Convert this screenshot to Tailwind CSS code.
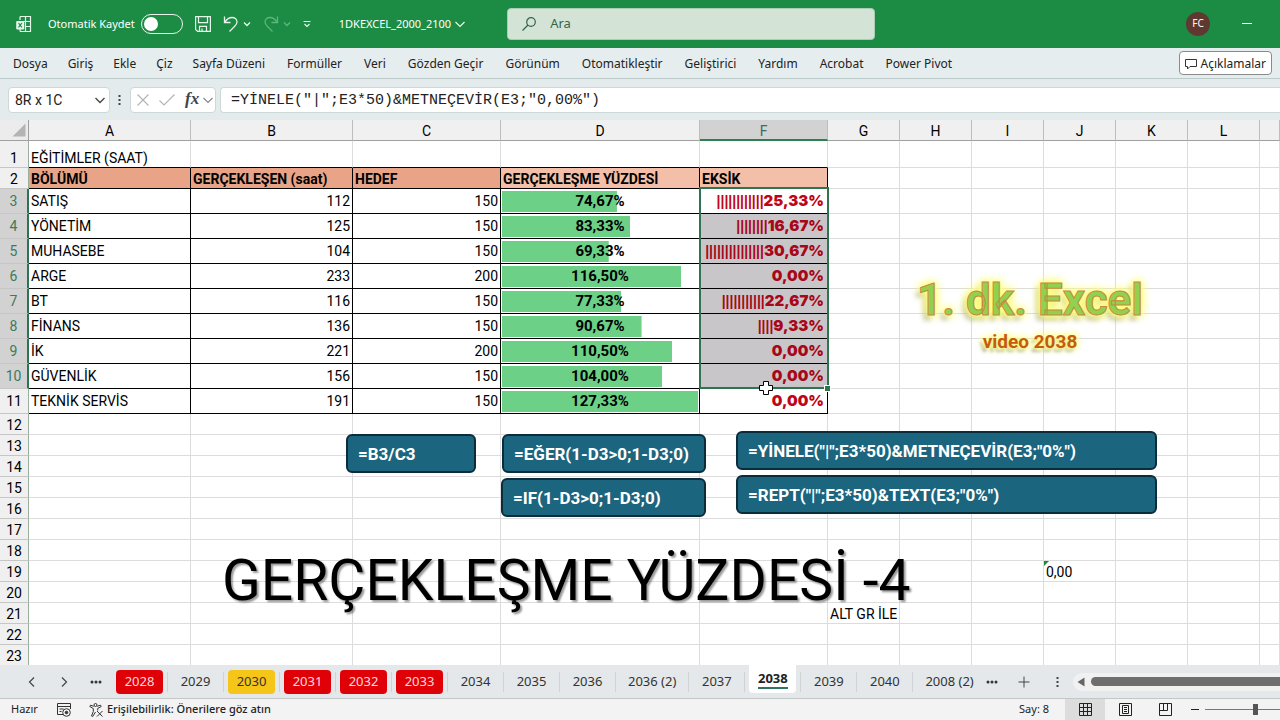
<!DOCTYPE html>
<html lang="tr">
  <head>
    <meta charset="UTF-8" />
    <title>1DKEXCEL_2000_2100</title>
    <meta name="viewport" content="width=device-width, initial-scale=1.0" />
    <script src="https://cdn.jsdelivr.net/npm/@tailwindcss/browser@4"></script>
  </head>
  <body
    class="h-screen flex flex-col overflow-hidden bg-white text-[#222] font-['Noto_Sans',sans-serif] text-xs"
  >
    <!-- Title bar -->
    <header class="h-12 shrink-0 flex items-center bg-[#1c8c45] text-white pl-4 pr-7">
      <svg class="w-4 h-4" viewBox="0 0 16 16" fill="none" stroke="#e6f6ea" stroke-width="1.2">
        <path d="M4 4V1.5a1 1 0 0 1 1-1h9.5v15H5a1 1 0 0 1-1-1V12M9.5.5v15M4 5.5h10.5M9 10.5h5.5" />
        <rect x=".2" y="5" width="8" height="8.5" rx="1" fill="#e6f6ea" stroke="none" />
        <path d="M2.5 7l3.4 4.4M5.9 7l-3.4 4.4" stroke="#1c8c45" />
      </svg>
      <label class="ml-4 flex items-center gap-1.5 text-[11px]">
        Otomatik Kaydet
        <input
          type="checkbox"
          class="appearance-none w-[42px] h-5 rounded-full border border-white/90 flex items-center px-0.5 before:content-[''] before:w-3.5 before:h-3.5 before:rounded-full before:bg-white"
        />
      </label>
      <button class="ml-3" aria-label="Kaydet">
        <svg class="w-4 h-4" viewBox="0 0 16 16" fill="none" stroke="#e6f6ea" stroke-width="1.2">
          <path d="M.6.6h14.8v14.8H2.6l-2-2zM3.5.6v6h9v-6M4.5 15.4v-5h7v5M7 15v-2.5" />
        </svg>
      </button>
      <button class="ml-3 flex items-center gap-1" aria-label="Geri Al">
        <svg class="w-4 h-4" viewBox="0 0 16 16" fill="none" stroke="#e6f6ea" stroke-width="1.3">
          <path d="M1.5.5v6h6M1.8 6.2C4 3 6.5 1.5 9 1.5c3 0 5 2 5 4.5 0 2-1 3-2.5 4.5L6.5 15.5" />
        </svg>
        <svg class="w-2 h-2" viewBox="0 0 8 8" fill="none" stroke="#e6f6ea" stroke-width="1.3"><path d="M1 2.5l3 3 3-3" /></svg>
      </button>
      <button class="ml-3 flex items-center gap-1" aria-label="Yinele">
        <svg class="w-4 h-4" viewBox="0 0 16 16" fill="none" stroke="#5fb57c" stroke-width="1.3">
          <path d="M14.5.5v6h-6M14.2 6.2C12 3 9.5 1.5 7 1.5c-3 0-5 2-5 4.5 0 2 1 3 2.5 4.5l5 5" />
        </svg>
        <svg class="w-2 h-2" viewBox="0 0 8 8" fill="none" stroke="#5fb57c" stroke-width="1.3"><path d="M1 2.5l3 3 3-3" /></svg>
      </button>
      <button class="ml-3" aria-label="Hızlı Erişim">
        <svg class="w-2 h-2" viewBox="0 0 8 8" fill="none" stroke="#e6f6ea" stroke-width="1.2"><path d="M.5 1.5h7M1.5 4L4 6.5 6.5 4" /></svg>
      </button>
      <button class="ml-7 flex items-center gap-1 text-[11px] whitespace-nowrap">
        1DKEXCEL_2000_2100
        <svg class="w-2.5 h-2.5" viewBox="0 0 10 10" fill="none" stroke="#e6f6ea" stroke-width="1.2"><path d="M.5 3L5 7.5 9.5 3" /></svg>
      </button>
      <label class="ml-[42px] w-[368px] h-8 flex items-center gap-3.5 rounded-sm border border-[#a9cdb4] bg-[#d3e4d7] px-3.5 text-[#35644a]">
        <svg class="w-3.5 h-3.5" viewBox="0 0 14 14" fill="none" stroke="#35644a" stroke-width="1.2"><circle cx="9" cy="5" r="4.3" /><path d="M6 8L.5 13.5" /></svg>
        <input type="text" placeholder="Ara" class="flex-1 text-[13px] outline-none placeholder:text-[#35644a]" />
      </label>
      <div class="ml-auto w-6 h-6 rounded-full bg-[#5f3830] flex items-center justify-center text-[10px]">FC</div>
      <button class="ml-8" aria-label="Simge durumuna küçült">
        <svg class="w-2.5 h-2.5" viewBox="0 0 10 10" stroke="#fff"><path d="M0 4.5h10" /></svg>
      </button>
    </header>

    <!-- Ribbon tabs -->
    <nav class="h-[31px] shrink-0 flex items-center gap-5 bg-[#e5edef] border-b border-[#bccaca] pl-[13px] pr-2 whitespace-nowrap">
      <div class="flex gap-5 pt-0.5">
        <a href="#">Dosya</a>
        <a href="#">Giriş</a>
        <a href="#">Ekle</a>
        <a href="#">Çiz</a>
      </div>
      <div class="flex gap-[22px] pt-0.5">
        <a href="#">Sayfa Düzeni</a>
        <a href="#">Formüller</a>
        <a href="#">Veri</a>
        <a href="#">Gözden Geçir</a>
        <a href="#">Görünüm</a>
        <a href="#">Otomatikleştir</a>
        <a href="#">Geliştirici</a>
        <a href="#">Yardım</a>
        <a href="#">Acrobat</a>
        <a href="#">Power Pivot</a>
      </div>
      <button class="ml-auto h-6 flex items-center gap-1 rounded border border-[#8a8a8a] bg-white px-[5px] pt-0.5">
        <svg class="w-3 h-3" viewBox="0 0 12 12" fill="none" stroke="#333"><path d="M.5 1.5h11v7H5L2.5 11V8.5h-2z" /></svg>
        Açıklamalar
      </button>
    </nav>

    <!-- Formula bar -->
    <div class="h-[41px] shrink-0 flex items-center bg-[#e3ebed] pl-2">
      <div class="w-[102px] h-[26px] flex items-center rounded border border-[#cdd8d8] bg-white pl-1.5 pr-1">
        <input type="text" value="8R x 1C" aria-label="Ad Kutusu" class="w-full min-w-0 text-sm font-['Roboto',sans-serif] outline-none" />
        <button aria-label="Adlar">
          <svg class="w-2.5 h-2.5" viewBox="0 0 10 10" fill="none" stroke="#444" stroke-width="1.3"><path d="M.5 3L5 7.5 9.5 3" /></svg>
        </button>
      </div>
      <svg class="w-[3px] h-3 ml-2 mr-[9px]" viewBox="0 0 3 12" fill="#444"><path d="M.5 1h2v2h-2zM.5 5h2v2h-2zM.5 9h2v2h-2z" /></svg>
      <div class="w-[86px] h-[26px] flex items-center gap-2.5 rounded border border-[#cdd8d8] bg-white pl-1.5">
        <svg class="w-3 h-3 shrink-0" viewBox="0 0 12 12" stroke="#b5b5b5" stroke-width="1.2"><path d="M.5.5l11 11M11.5.5l-11 11" /></svg>
        <svg class="w-4 h-3 shrink-0" viewBox="0 0 16 12" fill="none" stroke="#b5b5b5" stroke-width="1.2"><path d="M.5 6.5L5 11 15.5.5" /></svg>
        <button class="flex items-center gap-1 font-['Liberation_Serif',serif] italic text-[17px] font-bold text-[#444]" aria-label="İşlev Ekle">
          fx
          <svg class="w-2.5 h-2.5" viewBox="0 0 10 10" fill="none" stroke="#888" stroke-width="1.2"><path d="M.5 3L5 7.5 9.5 3" /></svg>
        </button>
      </div>
      <input
        type="text"
        aria-label="Formül Çubuğu"
        value='=YİNELE("|";E3*50)&amp;METNEÇEVİR(E3;"0,00%")'
        class="ml-1 flex-1 h-[26px] rounded-l border border-r-0 border-[#cdd8d8] bg-white px-2.5 pt-0.5 font-['Liberation_Mono',monospace] text-[15px] outline-none"
      />
    </div>

    <!-- Sheet -->
    <main class="relative flex-1 min-h-0 overflow-hidden font-['Roboto',sans-serif] text-sm leading-5 text-black">
      <table class="w-full table-fixed border-separate border-spacing-0 whitespace-nowrap">
        <colgroup>
          <col class="w-[29px]" />
          <col class="w-[162px]" />
          <col class="w-[162px]" />
          <col class="w-[148px]" />
          <col class="w-[199px]" />
          <col class="w-[128px]" />
          <col class="w-[72px]" />
          <col class="w-[72px]" />
          <col class="w-[72px]" />
          <col class="w-[72px]" />
          <col class="w-[72px]" />
          <col class="w-[72px]" />
          <col />
        </colgroup>
        <thead id="columns" class="leading-4"></thead>
        <tbody id="rows"></tbody>
      </table>

      <!-- Selection frame -->
      <div class="absolute left-[699px] top-[67px] w-[130px] h-[202px] border-2 border-[#2f7450]"></div>
      <div class="absolute left-[825px] top-[266px] w-[5px] h-[5px] bg-[#2f7450] outline outline-white"></div>

      <!-- Shapes on the sheet -->
      <div class="absolute left-[346px] top-[314px] w-[130px] h-[39px] flex items-center rounded-md border-2 border-[#0b2c3a] bg-[#1c657e] px-2.5 font-bold text-white text-[17px]">=B3/C3</div>
      <div class="absolute left-[502px] top-[314px] w-[204px] h-[39px] flex items-center rounded-md border-2 border-[#0b2c3a] bg-[#1c657e] px-2.5 font-bold text-white text-[17px]">=EĞER(1-D3&gt;0;1-D3;0)</div>
      <div class="absolute left-[501px] top-[358px] w-[205px] h-[39px] flex items-center rounded-md border-2 border-[#0b2c3a] bg-[#1c657e] px-2.5 font-bold text-white text-[17px]">=IF(1-D3&gt;0;1-D3;0)</div>
      <div class="absolute left-[736px] top-[311px] w-[421px] h-[39px] flex items-center rounded-md border-2 border-[#0b2c3a] bg-[#1c657e] px-2.5 font-bold text-white text-[17px]">=YİNELE("|";E3*50)&amp;METNEÇEVİR(E3;"0%")</div>
      <div class="absolute left-[736px] top-[355px] w-[421px] h-[39px] flex items-center rounded-md border-2 border-[#0b2c3a] bg-[#1c657e] px-2.5 font-bold text-white text-[17px]">=REPT("|";E3*50)&amp;TEXT(E3;"0%")</div>

      <div class="absolute left-[222px] top-[431px] text-[57px] leading-[60px] whitespace-nowrap [text-shadow:2px_2px_2px_rgb(0_0_0/0.4)]">GERÇEKLEŞME YÜZDESİ -4</div>

      <div class="absolute left-[900px] top-[154px] w-[260px] text-center font-bold whitespace-nowrap">
        <div class="text-[44px] leading-[52px] text-[#92d050] [-webkit-text-stroke:1px_#c58a3c] [text-shadow:0_0_5px_#ffff80,0_0_8px_#ffff80,0_0_10px_#ffff80,0_0_12px_#ffff80,-4px_5px_5px_rgb(110_110_90/0.5)]">1. dk. Excel</div>
        <div class="text-[19px] leading-8 text-[#c55a11] [text-shadow:0_0_4px_#ffff80,0_0_7px_#ffff80,0_0_9px_#ffff80,-3px_4px_3px_rgb(110_110_90/0.5)]">video 2038</div>
      </div>

      <!-- Pointer -->
      <svg class="absolute left-[759px] top-[261px] w-3.5 h-3.5" viewBox="0 0 14 14"><path d="M4.5.5h5v4h4v5h-4v4h-5v-4h-4v-5h4z" fill="#fff" stroke="#000" /></svg>
    </main>

    <!-- Sheet tabs -->
    <div class="h-[34px] shrink-0 flex items-center bg-[#e4e8ea] border-b border-[#c3c7c8] pl-7 overflow-hidden text-[13px] whitespace-nowrap">
      <button aria-label="Önceki"><svg class="w-2 h-2.5" viewBox="0 0 8 10" fill="none" stroke="#444" stroke-width="1.2"><path d="M6 .5L1.5 5 6 9.5" /></svg></button>
      <button class="ml-6" aria-label="Sonraki"><svg class="w-2 h-2.5" viewBox="0 0 8 10" fill="none" stroke="#444" stroke-width="1.2"><path d="M2 .5L6.5 5 2 9.5" /></svg></button>
      <button class="ml-[22px]" aria-label="Diğer sayfalar"><svg class="w-3 h-1" viewBox="0 0 12 4" fill="#333"><circle cx="2" cy="2" r="1.5" /><circle cx="6" cy="2" r="1.5" /><circle cx="10" cy="2" r="1.5" /></svg></button>
      <div id="tabs" class="flex items-center ml-[10px]"></div>
      <button aria-label="Diğer sayfalar"><svg class="w-3 h-1" viewBox="0 0 12 4" fill="#333"><circle cx="2" cy="2" r="1.5" /><circle cx="6" cy="2" r="1.5" /><circle cx="10" cy="2" r="1.5" /></svg></button>
      <button class="ml-5" aria-label="Yeni sayfa"><svg class="w-3 h-3" viewBox="0 0 12 12" stroke="#444"><path d="M6 .5v11M.5 6h11" /></svg></button>
      <svg class="w-[3px] h-3 ml-[26px] shrink-0" viewBox="0 0 3 12" fill="#444"><path d="M.5 1h2v2h-2zM.5 5h2v2h-2zM.5 9h2v2h-2z" /></svg>
      <div class="ml-3.5 flex-1 min-w-40 h-[18px] flex items-center gap-1.5 rounded-l-full bg-[#f1f1f1] pl-1">
        <svg class="w-2 h-2.5" viewBox="0 0 8 10" fill="#666"><path d="M7.5.5v9L.5 5z" /></svg>
        <div class="flex-1 h-[9px] rounded-l-full bg-[#6e6e6e]"></div>
      </div>
    </div>

    <!-- Status bar -->
    <footer class="h-[21px] shrink-0 flex items-center bg-[#f3f3f3] pl-[11px] overflow-hidden text-[11px] whitespace-nowrap">
      <span>Hazır</span>
      <button class="ml-[19px]" aria-label="Makro kaydet">
        <svg class="w-3.5 h-3.5" viewBox="0 0 14 14" fill="none" stroke="#333"><path d="M13.5 6V.5H.5v11H6M.5 3.5h13M2.5 6h4M2.5 8.5h2" /><circle cx="9.5" cy="9.5" r="3.8" /><circle cx="9.5" cy="9.5" r="1.3" fill="#333" /></svg>
      </button>
      <button class="ml-[18px] flex items-center gap-1 font-medium">
        <svg class="w-3.5 h-3.5" viewBox="0 0 14 14" fill="none" stroke="#333"><circle cx="6.5" cy="2" r="1.5" /><path d="M4.8 3.3L1.5 2.2.8 3.5l3.5 2v3L2.5 13l1.2.5L6.5 9M8.2 3.3l3.3-1.1.7 1.3-3.5 2v2M8 8l5.5 5.5M13.5 8L8 13.5" /></svg>
        Erişilebilirlik: Önerilere göz atın
      </button>
      <span class="ml-auto mr-4">Say: 8</span>
      <button class="w-10 h-full shrink-0 flex items-center justify-center bg-[#dcdcdc]" aria-label="Normal">
        <svg class="w-[13px] h-[13px]" viewBox="0 0 13 13" fill="none" stroke="#222"><path d="M.5.5h12v12H.5zM4.5.5v12M8.5.5v12M.5 4.5h12M.5 8.5h12" /></svg>
      </button>
      <button class="w-10 h-full shrink-0 flex items-center justify-center" aria-label="Sayfa Düzeni">
        <svg class="w-[13px] h-[13px]" viewBox="0 0 13 13" fill="none" stroke="#222"><path d="M.5.5h12v12H.5zM3.5 2.5h6v8h-6zM5 4.5h3M5 6.5h3M5 8.5h3" /></svg>
      </button>
      <button class="w-10 h-full shrink-0 flex items-center justify-center" aria-label="Sayfa Sonu Önizleme">
        <svg class="w-[13px] h-[13px]" viewBox="0 0 13 13" fill="none" stroke="#222"><path d="M.5.5h12v12H.5zM.5 7.5h8v-7M4.5.5v7" /></svg>
      </button>
      <button class="ml-1.5 shrink-0" aria-label="Uzaklaştır"><svg class="w-2 h-2" viewBox="0 0 8 8" stroke="#222"><path d="M0 3.5h8" /></svg></button>
      <div class="w-[81px] shrink-0 overflow-hidden pl-1.5 flex items-center">
        <input
          type="range"
          aria-label="Yakınlaştırma"
          class="w-[101px] h-3 shrink-0 appearance-none bg-[linear-gradient(#777,#777)] bg-[length:100%_1px] bg-center bg-no-repeat [&::-webkit-slider-thumb]:appearance-none [&::-webkit-slider-thumb]:w-[5px] [&::-webkit-slider-thumb]:h-[11px] [&::-webkit-slider-thumb]:bg-[#555]"
        />
      </div>
    </footer>

    <script>
      const letters = ['A', 'B', 'C', 'D', 'F', 'G', 'H', 'I', 'J', 'K', 'L', ''];
      const titles = ['BÖLÜMÜ', 'GERÇEKLEŞEN (saat)', 'HEDEF', 'GERÇEKLEŞME YÜZDESİ', 'EKSİK'];
      const data = [
        ['SATIŞ', 112, 150, '74,67', '25,33'],
        ['YÖNETİM', 125, 150, '83,33', '16,67'],
        ['MUHASEBE', 104, 150, '69,33', '30,67'],
        ['ARGE', 233, 200, '116,50', '0,00'],
        ['BT', 116, 150, '77,33', '22,67'],
        ['FİNANS', 136, 150, '90,67', '9,33'],
        ['İK', 221, 200, '110,50', '0,00'],
        ['GÜVENLİK', 156, 150, '104,00', '0,00'],
        ['TEKNİK SERVİS', 191, 150, '127,33', '0,00'],
      ];
      const toNumber = (text) => parseFloat(text.replace(',', '.'));
      const max = 127.33;

      const columnHead = letters.map((letter) => {
        const look = letter === 'F'
          ? 'bg-[#d2d2d2] text-[#3d6b5c] border-b-2 border-b-[#2f8050]'
          : 'bg-[#f0f0f0] border-b border-b-[#a0a0a0]';
        return `<th class="h-[21px] p-0 pt-0.5 font-normal border-r border-r-[#bdbdbd] ${look}">${letter}</th>`;
      });
      document.getElementById('columns').innerHTML = `
        <tr>
          <th class="h-[21px] p-0 bg-[#ececec] border-r border-b border-[#a0a0a0]">
            <svg class="w-3.5 h-3.5 ml-auto mr-0.5" viewBox="0 0 14 14" fill="#b4b4b4"><path d="M13.5.5v13H.5z" /></svg>
          </th>
          ${columnHead.join('')}
        </tr>`;

      function cell(row, col) {
        const item = data[row - 3];
        const black = 'p-0 px-0.5 border-r border-b border-black';
        if (row === 2 && col < 5) {
          const fill = col < 3 ? 'bg-[#e9a487]' : 'bg-[#f3bfa8]';
          return `<td class="${black} ${fill} pt-0.5 font-bold">${titles[col]}</td>`;
        }
        if (item && col === 0) return `<td class="${black}">${item[0]}</td>`;
        if (item && col < 3) return `<td class="${black} text-right">${item[col]}</td>`;
        if (item && col === 3) {
          const width = (toNumber(item[3]) / max) * 100;
          return `<td class="p-px border-r border-b border-black">
            <div class="h-[21px] flex items-center justify-center bg-[linear-gradient(#6cd187,#6cd187)] bg-no-repeat font-bold text-[15px]" style="background-size: ${width}% 100%">${item[3]}%</div>
          </td>`;
        }
        if (item && col === 4) {
          const bars = '|'.repeat(Math.floor(toNumber(item[4]) / 2));
          const fill = row > 3 && row < 11 ? 'bg-[#c8c6c8] text-[#a8071a]' : 'text-[#bf0518]';
          return `<td class="p-0 pr-[3px] border-r border-b border-black text-right ${fill}">
            <span class="font-['Liberation_Sans',sans-serif] font-bold">${bars}</span><span class="font-['Inter',sans-serif] font-black text-[15px]">${item[4]}%</span>
          </td>`;
        }
        const bottom = row === 1 && col < 5 ? 'border-b-black' : 'border-b-[#dcdcdc]';
        const plain = `p-0 px-0.5 border-r border-b border-r-[#dcdcdc] ${bottom}`;
        if (row === 1 && col === 0) return `<td class="${plain} align-bottom">EĞİTİMLER (SAAT)</td>`;
        if (row === 21 && col === 5) return `<td class="${plain} pt-0.5">ALT GR İLE</td>`;
        if (row === 19 && col === 8) {
          return `<td class="${plain} relative pt-0.5">0,00<svg class="absolute left-0 top-0 w-[5px] h-[5px]" viewBox="0 0 5 5" fill="#1e8a3c"><path d="M0 0h5L0 5z" /></svg></td>`;
        }
        return `<td class="${plain}"></td>`;
      }

      let rows = '';
      for (let row = 1; row <= 23; row++) {
        const tall = row > 2 && row < 12;
        const height = row === 1 ? 'h-[27px]' : tall ? 'h-[25px]' : 'h-[21px]';
        const look = row > 2 && row < 11
          ? 'bg-[#d2d2d2] text-[#3d7a5c] border-r-2 border-r-[#2f7450]'
          : 'bg-[#f0f0f0] border-r border-r-[#9ab09f]';
        const place = row === 1 ? 'align-bottom' : tall ? 'align-middle' : 'align-middle pt-0.5';
        rows += `<tr class="${tall ? 'leading-5' : 'leading-[18px]'}">
          <th class="${height} ${look} p-0 ${place} font-normal border-b border-b-[#c6c6c6]">${row}</th>
          ${letters.map((_, col) => cell(row, col)).join('')}
        </tr>`;
      }
      document.getElementById('rows').innerHTML = rows;

      const tabs = [
        '2028', '2029', '2030', '2031', '2032', '2033', '2034', '2035', '2036',
        '2036 (2)', '2037', '2038', '2039', '2040', '2008 (2)',
      ];
      const red = ['2028', '2031', '2032', '2033'];
      document.getElementById('tabs').innerHTML = tabs
        .map((name, i) => {
          let look = 'h-6 text-[#333]';
          if (red.includes(name)) look = 'h-6 rounded bg-[#e00008] text-[#ffd9d9]';
          if (name === '2030') look = 'h-6 rounded bg-[#f5c518] text-[#333]';
          let label = name;
          if (name === '2038') {
            look = 'h-7 -mt-1.5 rounded-b bg-white font-bold';
            label = `<span class="border-b-2 border-[#2f7460]">${name}</span>`;
          }
          const line = i < tabs.length - 1 ? 'border-r border-[#cfd3d5]' : '';
          return `<div class="h-5 flex items-center px-1 min-w-14 ${line}"><button class="flex-1 px-2 ${look}">${label}</button></div>`;
        })
        .join('');
    </script>
  </body>
</html>
